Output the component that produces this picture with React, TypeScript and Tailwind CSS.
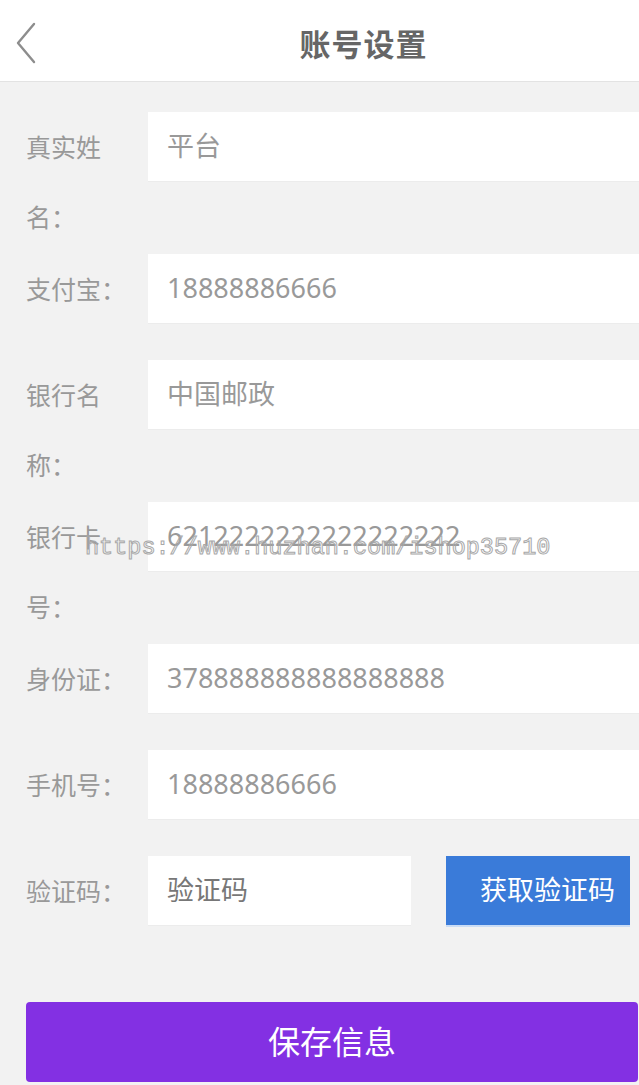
import React from 'react';

const fields = [
  { label: '真实姓名：', value: '平台' },
  { label: '支付宝：', value: '18888886666' },
  { label: '银行名称：', value: '中国邮政' },
  { label: '银行卡号：', value: '6212222222222222222' },
  { label: '身份证：', value: '378888888888888888' },
  { label: '手机号：', value: '18888886666' },
];

const font = "font-['Noto_Sans','Noto_Sans_CJK_SC',sans-serif]";

const App: React.FC = () => {
  return (
    <div className={`relative min-h-[1085px] w-[639px] bg-[#f2f2f2] ${font}`}>
      {/* Header */}
      <header className="mt-[2px] h-[80px] bg-white border-b border-[#e3e3e3] flex items-center relative">
        <button className="absolute left-[12px] top-[19px] w-[28px] h-[44px] flex items-center justify-center">
          <svg width="24" height="42" viewBox="0 0 24 42" fill="none">
            <path d="M20 2 L4 21 L20 40" stroke="#8d8d8d" strokeWidth="2.4" strokeLinecap="round" strokeLinejoin="round" />
          </svg>
        </button>
        <h1 className="flex-1 text-center text-[31px] font-bold text-[#666] pl-[88px] pt-[5px] tracking-[1px]">账号设置</h1>
      </header>

      {/* Form */}
      <div className="pt-[30px] flex flex-col gap-[2px]">
        {fields.map((f) => (
          <div key={f.label} className="flex min-h-[104px] items-start">
            <label className="w-[148px] shrink-0 pl-[26px] pr-[2px] text-[25px] leading-[70px] text-[#999]">
              {f.label}
            </label>
            <div className="flex-1 h-[70px] bg-white border-b border-[#ececec] flex items-center pl-[19px] text-[27px] text-[#999]">
              {f.value}
            </div>
          </div>
        ))}

        <div className="flex min-h-[104px] items-start">
          <label className="w-[148px] shrink-0 pl-[26px] text-[25px] leading-[70px] text-[#999]">验证码：</label>
          <div className="w-[263px] h-[70px] bg-white border-b border-[#ececec] flex items-center pl-[19px] text-[27px] text-[#777]">
            验证码
          </div>
          <button className="ml-[35px] w-[184px] h-[71px] bg-[#3a7bd9] border-b-2 border-[#c9dcf5] text-white text-[27px] text-left pl-[34px]">
            获取验证码
          </button>
        </div>
      </div>

      <div className="pl-[26px] pr-[1px] mt-[42px]">
        <button className="w-full h-[80px] rounded-[4px] bg-[#8330e3] text-white text-[32px]">保存信息</button>
      </div>

      {/* Watermark */}
      <div className="absolute left-[85px] top-[528px] pointer-events-none font-['Liberation_Mono',monospace] text-[23.5px] text-transparent [-webkit-text-stroke:1px_#a8a8a8] whitespace-nowrap">
        https://www.huzhan.com/ishop35710
      </div>
    </div>
  );
};

export default App;
